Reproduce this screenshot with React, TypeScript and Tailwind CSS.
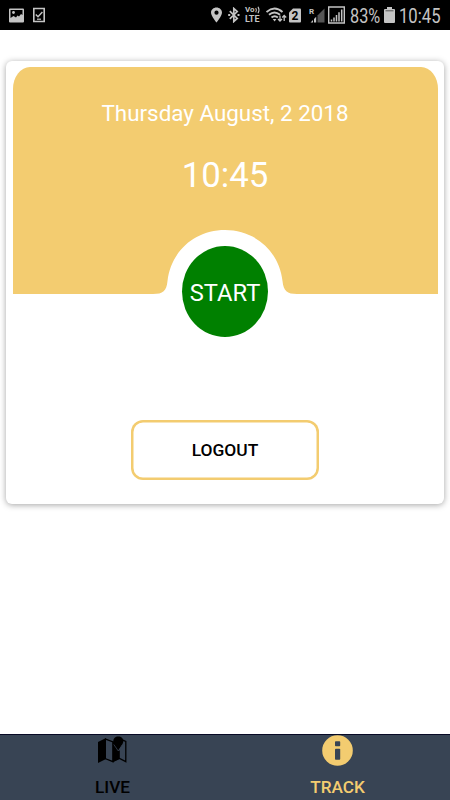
import React from "react";

function StatusBar() {
  return (
    <header className="flex h-[30px] items-center bg-black text-[#c4c4c4]">
      <svg className="ml-[9px] h-[15px] w-[15px]" viewBox="0 0 15 15" fill="currentColor">
        <path fillRule="evenodd" d="M1 .5h13q1 0 1 1v12q0 1-1 1H1q-1 0-1-1v-12q0-1 1-1zM1.500 2V10L4.500 8 7 9.500 8.500 7.500 10 8.500 12 6 13.500 7V2z" />
        <circle cx="4.500" cy="4.500" r="1.400" />
      </svg>
      <svg className="ml-[9px] h-4 w-3" viewBox="0 0 12 16" fill="none" stroke="currentColor">
        <path d="M.8 1.500h10.400v13H.8z" strokeWidth="1.600" />
        <path d="M2.800 7.500l2.200 2.200 4.400-4.600" strokeWidth="1.500" />
        <path d="M4 12.200h4" strokeWidth="1.200" />
      </svg>
      <svg className="ml-[166px] h-4 w-[11px]" viewBox="0 0 11 16" fill="currentColor">
        <path fillRule="evenodd" d="M5.500.5C2.500.5 0 2.700 0 5.600 0 9.300 5.500 15.500 5.500 15.500s5.500-6.200 5.500-9.900C11 2.700 8.500.5 5.500.5zm0 3.100a2.100 2.100 0 110 4.200 2.100 2.100 0 010-4.200z" />
      </svg>
      <svg className="ml-[6px] h-4 w-3" viewBox="0 0 12 16" fill="none" stroke="currentColor" strokeWidth="1.700">
        <path d="M1.800 4.200l7.400 7.300-3.400 3V1.500l3.400 3-7.400 7.300" />
        <path d="M.2 8h2M9.500 8h2" strokeWidth="2" />
      </svg>
      <div className="ml-[5px] flex h-[18px] w-[17px] flex-col justify-between pb-px font-bold">
        <div className="flex h-2">
          <span className="w-[10px] text-[8px] leading-[8px]">Vo</span>
          <svg className="h-2 w-[6px]" viewBox="0 0 6 8" fill="none" stroke="currentColor" strokeWidth="1.100">
            <path d="M.7 2q1.500 2.200 0 4.400M3 .8q2 3.200 0 6.400" />
          </svg>
        </div>
        <span className="h-2 text-[9px] leading-[8px]">LTE</span>
      </div>
      <svg className="ml-[4px] h-4 w-[21px]" viewBox="0 0 21 16" fill="none" stroke="currentColor">
        <path d="M.5 5Q8.500-2 16.500 5M3 7.800q5.500-4.600 11 0M5.500 10.500q3.200-2.600 6.400 0" strokeWidth="1.900" />
        <path d="M6.800 12h3.600L8.600 14.500z" fill="currentColor" stroke="none" />
        <path d="M14 8.500v5.500m-2-2 2 2 2-2M18.200 14V8.500m-2 2 2-2 2 2" strokeWidth="1.300" />
      </svg>
      <svg className="ml-[2px] h-[15px] w-3" viewBox="0 0 12 15">
        <path d="M4 .5h7q1 0 1 1v12q0 1-1 1H1q-1 0-1-1V4.500z" fill="currentColor" />
        <text x="6" y="12" textAnchor="middle" fontFamily="Roboto, sans-serif" fontWeight="700" fontSize="12" fill="#000">2</text>
      </svg>
      <svg className="ml-[8px] h-[17px] w-4" viewBox="0 0 16 17" fill="currentColor">
        <text x="0" y="7" fontFamily="Roboto, sans-serif" fontWeight="700" fontSize="8">R</text>
        <path d="M1.500 15.500L4 13v2.500zM5 12l2.200-2.200v5.700H5z" />
        <path d="M8.500 8.500L15.500 1.500v14h-7z" fill="#555" />
      </svg>
      <svg className="ml-[3px] h-[18px] w-[17px]" viewBox="0 0 17 18" fill="none" stroke="currentColor">
        <path d="M.7 1h15.600v16H.7z" strokeWidth="1.400" />
        <path d="M3.500 15.500v-2M6 15.500v-4M8.500 15.500V9M11 15.500V6.300M13.700 15.500V3.500" strokeWidth="1.500" />
      </svg>
      <span className="ml-[5px] w-[32px] origin-left scale-x-[0.840] whitespace-nowrap pt-[3px] text-[19.400px] leading-[26px]">83%</span>
      <svg className="ml-[2px] h-4 w-[11px]" viewBox="0 0 11 16" fill="currentColor">
        <path d="M3 0h5v2h2q1 0 1 1v12q0 1-1 1H1q-1 0-1-1V3q0-1 1-1h2z" />
        <path d="M1.500 3.800h8" stroke="#555" strokeWidth="1" />
      </svg>
      <span className="ml-[4px] origin-left scale-x-[0.860] whitespace-nowrap pt-[3px] text-[19.400px] leading-[26px]">10:45</span>
    </header>
  );
}

function TrackerCard() {
  return (
    <section className="mx-[6px] mt-[31px] flex h-[443px] flex-col items-center rounded-[6px] bg-white px-[6.500px] pt-[6.400px] shadow-[0_1px_6px_rgba(0,0,0,0.36)]">
      <div className="flex h-[226.500px] w-full shrink-0 flex-col items-center rounded-tl-[17px_22px] rounded-tr-[17px_22px] bg-[#f3cc70] text-white">
        <p className="mt-[30px] whitespace-nowrap text-[22.400px] leading-[32px]">Thursday August, 2 2018</p>
        <p className="mt-[24px] whitespace-nowrap text-[34.800px] leading-[44px]">10:45</p>
        <svg className="mt-auto h-[65px] w-[144px] shrink-0" viewBox="0 0 144 65" fill="#fff">
          <path d="M0 65C10 65 13.500 62 14.500 52C18 22 42 1 72 1C102 1 126 22 129.500 52C130.500 62 134 65 144 65z" />
        </svg>
      </div>
      <button className="-mt-[47.500px] flex h-[91px] w-[86px] shrink-0 items-center justify-center rounded-[50%] bg-[#008000] pt-[3px] text-[23.700px] text-white">
        START
      </button>
      <button className="mt-[82.500px] flex h-[60px] w-[188px] shrink-0 items-center justify-center rounded-[12px] bg-white pt-px text-[17.400px] font-medium text-black shadow-[inset_0_0_0_2.500px_#f3cc70]">
        LOGOUT
      </button>
    </section>
  );
}

function TabBar() {
  return (
    <nav className="mt-auto grid h-[66px] grid-cols-2 border-t border-[#080a25] bg-[#384454] text-[17.200px] font-medium">
      <button className="flex flex-col items-center text-black">
        <svg className="mt-[1px] h-[29px] w-[29px]" viewBox="0 0 29 29" fill="currentColor">
          <path d="M0 6L8 2v21L0 27z" />
          <path d="M7 2.800l8 3.200v19.700L7 22.500M15 25.500l6.500-3 6.300 3.200V5.500l-3-1.300" fill="none" stroke="currentColor" strokeWidth="1.300" />
          <path d="M14.500 5.500l2 .3L20 12l1.800 3v7.500l-7.300 3.700z" />
          <path d="M20.300.500c-3 0-5 2-5 4.700 0 2.800 5 9.300 5 9.300s5-6.500 5-9.300c0-2.700-2-4.700-5-4.700z" />
          <path d="M15.800 8.500l4.500 6.500 4-6.300" fill="none" stroke="#384454" strokeWidth=".8" />
        </svg>
        <span className="mt-[10px] leading-[24px]">LIVE</span>
      </button>
      <button className="flex flex-col items-center text-[#f3cc70]">
        <svg className="h-[31px] w-[31px]" viewBox="0 0 31 31">
          <circle cx="15.500" cy="15.500" r="15.300" fill="currentColor" />
          <rect x="13" y="6.300" width="5.200" height="5" rx=".8" fill="#384454" />
          <rect x="13" y="13.800" width="5.200" height="11" rx=".8" fill="#384454" />
        </svg>
        <span className="mt-[9px] leading-[24px]">TRACK</span>
      </button>
    </nav>
  );
}

export default function App() {
  return (
    <main className="flex h-[800px] w-[450px] flex-col overflow-hidden bg-white font-[Roboto,sans-serif]">
      <StatusBar />
      <TrackerCard />
      <TabBar />
    </main>
  );
}
